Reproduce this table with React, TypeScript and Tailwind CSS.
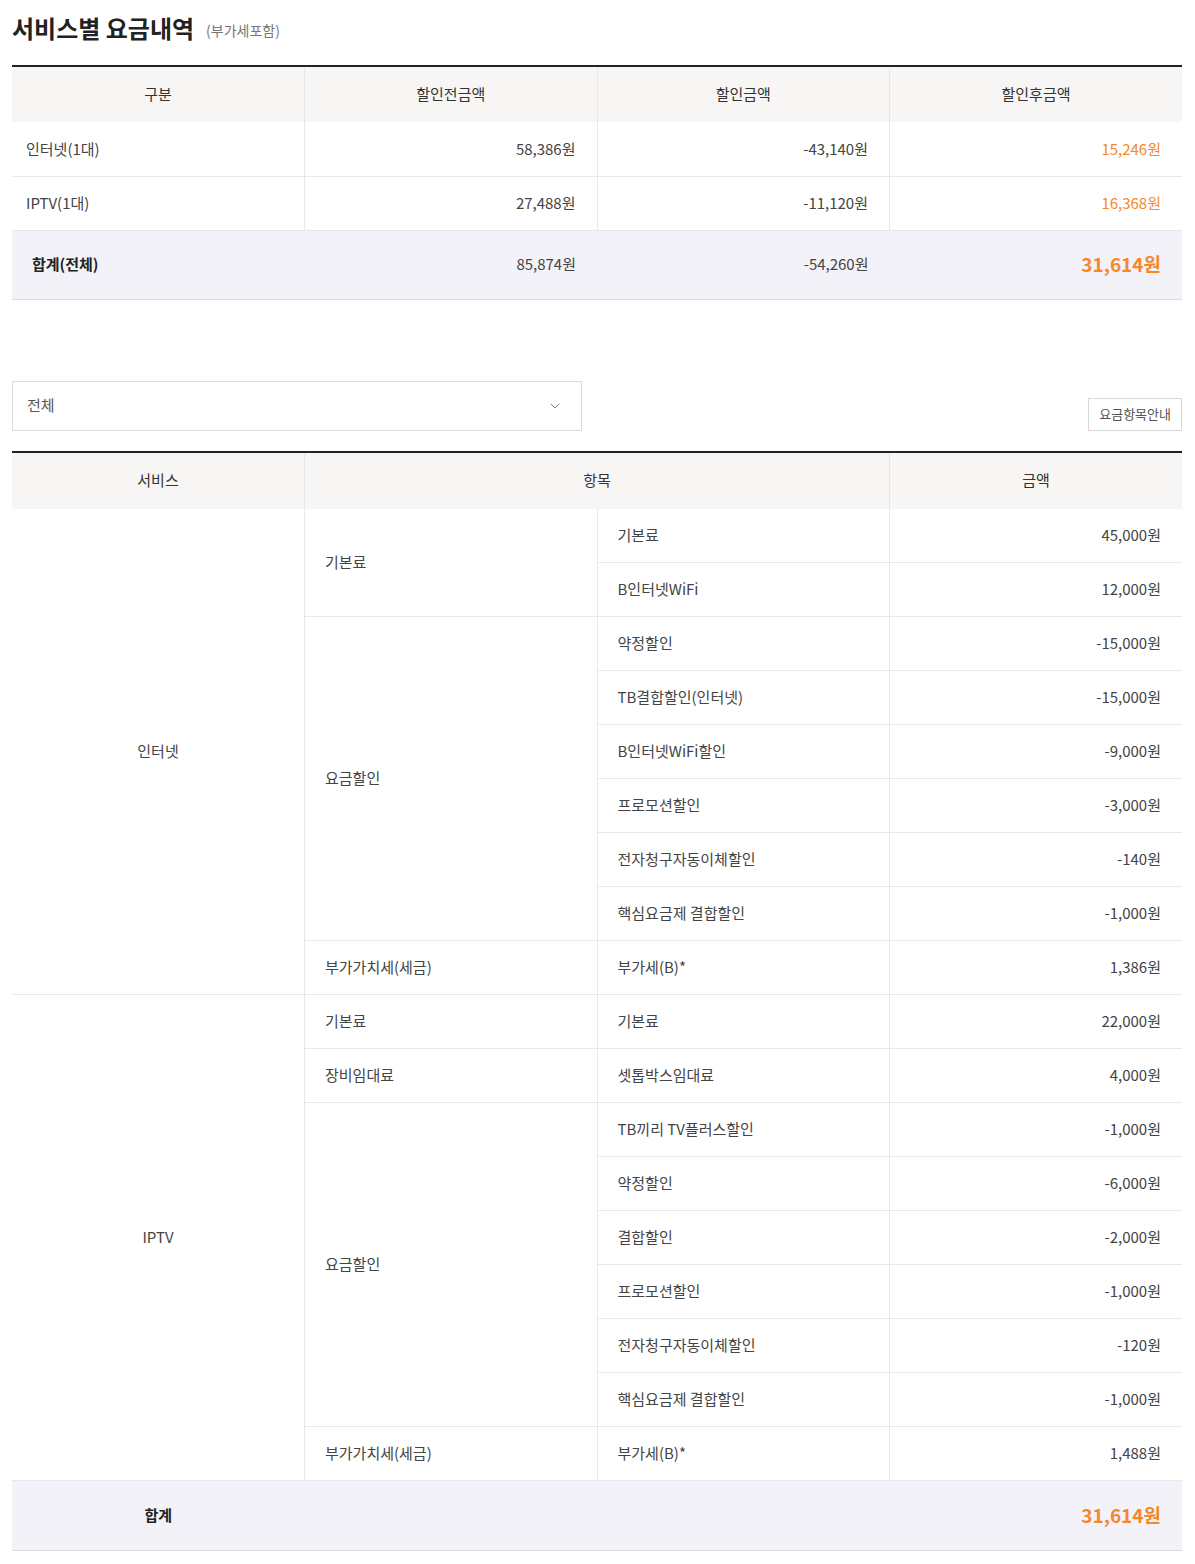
import { ChevronDown } from "lucide-react";

const font = { fontFamily: '"Noto Sans CJK KR", "Noto Sans", sans-serif' };

const summary = [
  { name: "인터넷(1대)", before: "58,386원", discount: "-43,140원", after: "15,246원" },
  { name: "IPTV(1대)", before: "27,488원", discount: "-11,120원", after: "16,368원" },
];

type Group = { label: string; items: [string, string][] };
type Service = { name: string; groups: Group[] };

const services: Service[] = [
  {
    name: "인터넷",
    groups: [
      { label: "기본료", items: [["기본료", "45,000원"], ["B인터넷WiFi", "12,000원"]] },
      {
        label: "요금할인",
        items: [
          ["약정할인", "-15,000원"],
          ["TB결합할인(인터넷)", "-15,000원"],
          ["B인터넷WiFi할인", "-9,000원"],
          ["프로모션할인", "-3,000원"],
          ["전자청구자동이체할인", "-140원"],
          ["핵심요금제 결합할인", "-1,000원"],
        ],
      },
      { label: "부가가치세(세금)", items: [["부가세(B)*", "1,386원"]] },
    ],
  },
  {
    name: "IPTV",
    groups: [
      { label: "기본료", items: [["기본료", "22,000원"]] },
      { label: "장비임대료", items: [["셋톱박스임대료", "4,000원"]] },
      {
        label: "요금할인",
        items: [
          ["TB끼리 TV플러스할인", "-1,000원"],
          ["약정할인", "-6,000원"],
          ["결합할인", "-2,000원"],
          ["프로모션할인", "-1,000원"],
          ["전자청구자동이체할인", "-120원"],
          ["핵심요금제 결합할인", "-1,000원"],
        ],
      },
      { label: "부가가치세(세금)", items: [["부가세(B)*", "1,488원"]] },
    ],
  },
];

const th = "bg-[#f7f6f4] text-[15px] font-normal text-[#333] text-center";
const td = "h-[54px] text-[15px] text-[#444] border-b border-[#e8e8e8]";

export default function App() {
  return (
    <div className="bg-white min-h-[1564px] pt-[10px]" style={font}>
      <div className="ml-3 w-[1170px]">
        <div className="flex items-center gap-3 h-[36px]">
          <h2 className="text-[24px] font-bold text-[#222] leading-none">서비스별 요금내역</h2>
          <span className="text-[14px] text-[#777] leading-none pt-[4px]">(부가세포함)</span>
        </div>

        <table className="mt-[19px] w-full table-fixed border-collapse border-t-2 border-[#222]">
          <thead>
            <tr>
              <th className={`${th} h-[56px]`}>구분</th>
              <th className={`${th} h-[56px] border-l border-[#e8e8e8]`}>할인전금액</th>
              <th className={`${th} h-[56px] border-l border-[#e8e8e8]`}>할인금액</th>
              <th className={`${th} h-[56px] border-l border-[#e8e8e8]`}>할인후금액</th>
            </tr>
          </thead>
          <tbody>
            {summary.map((r) => (
              <tr key={r.name}>
                <td className={`${td} pl-[14px]`}>{r.name}</td>
                <td className={`${td} border-l text-right pr-[21px]`}>{r.before}</td>
                <td className={`${td} border-l text-right pr-[21px]`}>{r.discount}</td>
                <td className={`${td} border-l text-right pr-[21px] text-[#f6872a]`}>{r.after}</td>
              </tr>
            ))}
            <tr className="bg-[#f3f2f9] border-t border-b border-[#dcdcdc]">
              <td className="h-[69px] pl-[20px] text-[15px] font-semibold text-[#222]">합계(전체)</td>
              <td className="text-right pr-[21px] text-[15px] text-[#444]">85,874원</td>
              <td className="text-right pr-[21px] text-[15px] text-[#444]">-54,260원</td>
              <td className="text-right pr-[21px] text-[19px] font-bold text-[#f6872a]">31,614원</td>
            </tr>
          </tbody>
        </table>

        <div className="mt-[81px] flex items-end justify-between">
          <div className="w-[570px] h-[50px] border border-[#dcdcdc] flex items-center justify-between pl-[14px] pr-[18px]">
            <span className="text-[15px] text-[#555]">전체</span>
            <ChevronDown className="w-[16px] h-[16px] text-[#666]" strokeWidth={1.25} />
          </div>
          <button className="h-[33px] px-[10px] border border-[#d8d8d8] text-[13px] text-[#555] bg-white">
            요금항목안내
          </button>
        </div>

        <table className="mt-[20px] w-full table-fixed border-collapse border-t-2 border-[#222]">
          <thead>
            <tr>
              <th className={`${th} h-[57px]`}>서비스</th>
              <th colSpan={2} className={`${th} h-[57px] border-l border-[#e8e8e8]`}>항목</th>
              <th className={`${th} h-[57px] border-l border-[#e8e8e8]`}>금액</th>
            </tr>
          </thead>
          <tbody>
            {services.flatMap((s) => {
              const total = s.groups.reduce((n, g) => n + g.items.length, 0);
              const rows: JSX.Element[] = [];
              s.groups.forEach((g, gi) =>
                g.items.forEach(([item, amount], ii) => {
                  rows.push(
                    <tr key={`${s.name}-${gi}-${ii}`}>
                      {gi === 0 && ii === 0 && (
                        <td rowSpan={total} className={`${td} text-center`}>
                          {s.name}
                        </td>
                      )}
                      {ii === 0 && (
                        <td rowSpan={g.items.length} className={`${td} border-l pl-[20px]`}>
                          {g.label}
                        </td>
                      )}
                      <td className={`${td} border-l pl-[20px]`}>{item}</td>
                      <td className={`${td} border-l text-right pr-[21px]`}>{amount}</td>
                    </tr>
                  );
                })
              );
              return rows;
            })}
            <tr className="bg-[#f3f2f9] border-t border-b border-[#dcdcdc]">
              <td className="h-[70px] text-center text-[15px] font-semibold text-[#222]">합계</td>
              <td colSpan={2}></td>
              <td className="text-right pr-[21px] text-[19px] font-bold text-[#f6872a]">31,614원</td>
            </tr>
          </tbody>
        </table>
      </div>
    </div>
  );
}
